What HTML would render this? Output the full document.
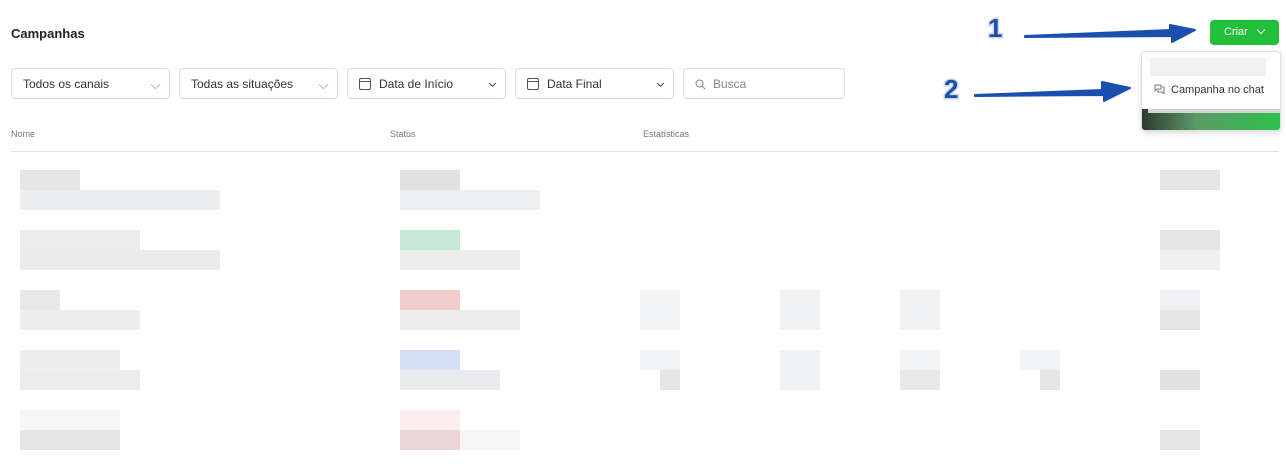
<!DOCTYPE html><html><head><meta charset="utf-8"><style>
body{margin:0;width:1286px;height:470px;background:#fff;font-family:"Liberation Sans",sans-serif;position:relative;overflow:hidden;color:#222}
.a{position:absolute}
.sel{position:absolute;top:68px;height:31px;border:1px solid #dcdcdc;border-radius:4px;box-sizing:border-box;font-size:12px;line-height:30px;padding-left:11px;color:#333}
.chev{position:absolute;right:10px;top:12px;width:6px;height:6px;border-right:1px solid #aaa;border-bottom:1px solid #aaa;transform:rotate(45deg)}
.cal{display:inline-block;width:10px;height:10px;border:1.5px solid #555;border-radius:2px;vertical-align:-2px;margin-right:8px;position:relative}
.cal:after{content:"";position:absolute;left:0;right:0;top:2px;border-top:1.5px solid #555}
.th{position:absolute;top:129px;font-size:9px;color:#777}
</style></head><body>
<div class="a" style="left:11px;top:26px;font-size:13px;font-weight:bold;color:#222">Campanhas</div>
<div class="a" style="left:1210px;top:20px;width:69px;height:25px;background:#22c03a;border-radius:4px;color:#fff;font-size:11px;line-height:25px;padding-left:14px;box-sizing:border-box">Criar<span style="position:absolute;left:48px;top:7px;width:5px;height:5px;border-right:1px solid #fff;border-bottom:1px solid #fff;transform:rotate(45deg)"></span></div>

<div class="sel" style="left:11px;width:159px">Todos os canais<span class="chev" style="border-color:#bbb"></span></div>
<div class="sel" style="left:179px;width:159px">Todas as situações<span class="chev" style="border-color:#bbb"></span></div>
<div class="sel" style="left:347px;width:159px"><span class="cal"></span>Data de Início<span class="chev" style="border-color:#444;width:4px;height:4px"></span></div>
<div class="sel" style="left:515px;width:159px"><span class="cal"></span>Data Final<span class="chev" style="border-color:#444;width:4px;height:4px"></span></div>
<div class="sel" style="left:683px;width:162px;color:#888;padding-left:29px">Busca<svg class="a" style="left:11px;top:10px" width="11" height="11" viewBox="0 0 11 11"><circle cx="4.5" cy="4.5" r="3.5" fill="none" stroke="#888"/><line x1="7" y1="7" x2="10" y2="10" stroke="#888"/></svg></div>

<div class="th" style="left:11px">Nome</div>
<div class="th" style="left:390px">Status</div>
<div class="th" style="left:643px">Estatísticas</div>
<div class="a" style="left:11px;top:151px;width:1268px;height:1px;background:#e2e2e2"></div>

<div class="a" style="left:20px;top:170px;width:60px;height:20px;background:#e6e6e6"></div>
<div class="a" style="left:20px;top:190px;width:200px;height:20px;background:#eceeef"></div>
<div class="a" style="left:400px;top:170px;width:60px;height:20px;background:#e2e2e2"></div>
<div class="a" style="left:400px;top:190px;width:140px;height:20px;background:#eeeff0"></div>
<div class="a" style="left:1160px;top:170px;width:60px;height:20px;background:#e6e6e6"></div>

<div class="a" style="left:20px;top:230px;width:120px;height:20px;background:#ececec"></div>
<div class="a" style="left:20px;top:250px;width:200px;height:20px;background:#ebebeb"></div>
<div class="a" style="left:400px;top:230px;width:60px;height:20px;background:#c4ead6"></div>
<div class="a" style="left:400px;top:250px;width:120px;height:20px;background:#eeeeee"></div>
<div class="a" style="left:1160px;top:230px;width:60px;height:20px;background:#e6e6e6"></div>
<div class="a" style="left:1160px;top:250px;width:60px;height:20px;background:#efefef"></div>

<div class="a" style="left:20px;top:290px;width:40px;height:20px;background:#e8e8e8"></div>
<div class="a" style="left:20px;top:310px;width:120px;height:20px;background:#eeeeee"></div>
<div class="a" style="left:400px;top:290px;width:60px;height:20px;background:#f0cccc"></div>
<div class="a" style="left:400px;top:310px;width:120px;height:20px;background:#ececec"></div>
<div class="a" style="left:640px;top:290px;width:40px;height:40px;background:#f1f3f4"></div>
<div class="a" style="left:780px;top:290px;width:40px;height:40px;background:#f0f1f2"></div>
<div class="a" style="left:900px;top:290px;width:40px;height:40px;background:#f0f1f2"></div>
<div class="a" style="left:1160px;top:290px;width:40px;height:20px;background:#eef0f4"></div>
<div class="a" style="left:1160px;top:310px;width:40px;height:20px;background:#e4e4e4"></div>

<div class="a" style="left:20px;top:350px;width:100px;height:20px;background:#eeeeee"></div>
<div class="a" style="left:20px;top:370px;width:120px;height:20px;background:#ececec"></div>
<div class="a" style="left:400px;top:350px;width:60px;height:20px;background:#d3dff4"></div>
<div class="a" style="left:400px;top:370px;width:100px;height:20px;background:#e9eaee"></div>
<div class="a" style="left:640px;top:350px;width:40px;height:20px;background:#f2f3f4"></div>
<div class="a" style="left:660px;top:370px;width:20px;height:20px;background:#e6e6e6"></div>
<div class="a" style="left:780px;top:350px;width:40px;height:40px;background:#f0f1f2"></div>
<div class="a" style="left:900px;top:350px;width:40px;height:20px;background:#f2f3f4"></div>
<div class="a" style="left:900px;top:370px;width:40px;height:20px;background:#e8e8e8"></div>
<div class="a" style="left:1020px;top:350px;width:40px;height:20px;background:#f2f3f4"></div>
<div class="a" style="left:1040px;top:370px;width:20px;height:20px;background:#e6e6e6"></div>
<div class="a" style="left:1160px;top:370px;width:40px;height:20px;background:#e2e2e2"></div>

<div class="a" style="left:20px;top:410px;width:100px;height:20px;background:#f6f6f6"></div>
<div class="a" style="left:20px;top:430px;width:100px;height:20px;background:#e6e6e6"></div>
<div class="a" style="left:400px;top:410px;width:60px;height:20px;background:#fbeeee"></div>
<div class="a" style="left:400px;top:430px;width:60px;height:20px;background:#eed5d5"></div>
<div class="a" style="left:460px;top:430px;width:60px;height:20px;background:#f6f6f6"></div>
<div class="a" style="left:1160px;top:430px;width:40px;height:20px;background:#e6e6e6"></div>

<!-- dropdown -->
<div class="a" style="left:1141px;top:51px;width:138px;height:78px;background:#fff;border:1px solid #e0e0e0;border-radius:4px;box-shadow:0 2px 6px rgba(0,0,0,.15);overflow:hidden">
<div class="a" style="left:8px;top:6px;width:116px;height:18px;background:#f1f1f1"></div>
<div class="a" style="left:12px;top:32px;font-size:11px;color:#333;white-space:nowrap"><svg width="11" height="10" viewBox="0 0 11 10" style="vertical-align:-1px;margin-right:6px"><path d="M1 1h6v4H3l-2 2z M4 6v2h4l2 2V3H8" fill="none" stroke="#777"/></svg>Campanha no chat</div>
<div class="a" style="left:0;top:57px;width:138px;height:21px;background:linear-gradient(90deg,#2c3a30,#5a9c66 40%,#2ec04a)"></div>
<div class="a" style="left:6px;top:57px;width:132px;height:4px;background:#cfd8d0"></div>
</div>

<!-- annotations -->
<svg class="a" style="left:0;top:0" width="1286" height="120">
<path d="M1025 36 L1170 30 L1170 25 L1195 30 L1172 42 L1172 36 L1025 37 z" fill="#1a4fb0" stroke="#1a4fb0" stroke-width="2" stroke-linejoin="round"/>
<path d="M975 95 L1102 90 L1102 82 L1130 88 L1104 101 L1104 95 L975 96 z" fill="#1a4fb0" stroke="#1a4fb0" stroke-width="2" stroke-linejoin="round"/>
<text x="988" y="37" font-size="26" font-weight="bold" fill="#1a4fb0" stroke="#cfd6e6" stroke-width="3" paint-order="stroke" font-family="Liberation Sans">1</text>
<text x="944" y="98" font-size="26" font-weight="bold" fill="#1a4fb0" stroke="#cfd6e6" stroke-width="3" paint-order="stroke" font-family="Liberation Sans">2</text>
</svg>
</body></html>
